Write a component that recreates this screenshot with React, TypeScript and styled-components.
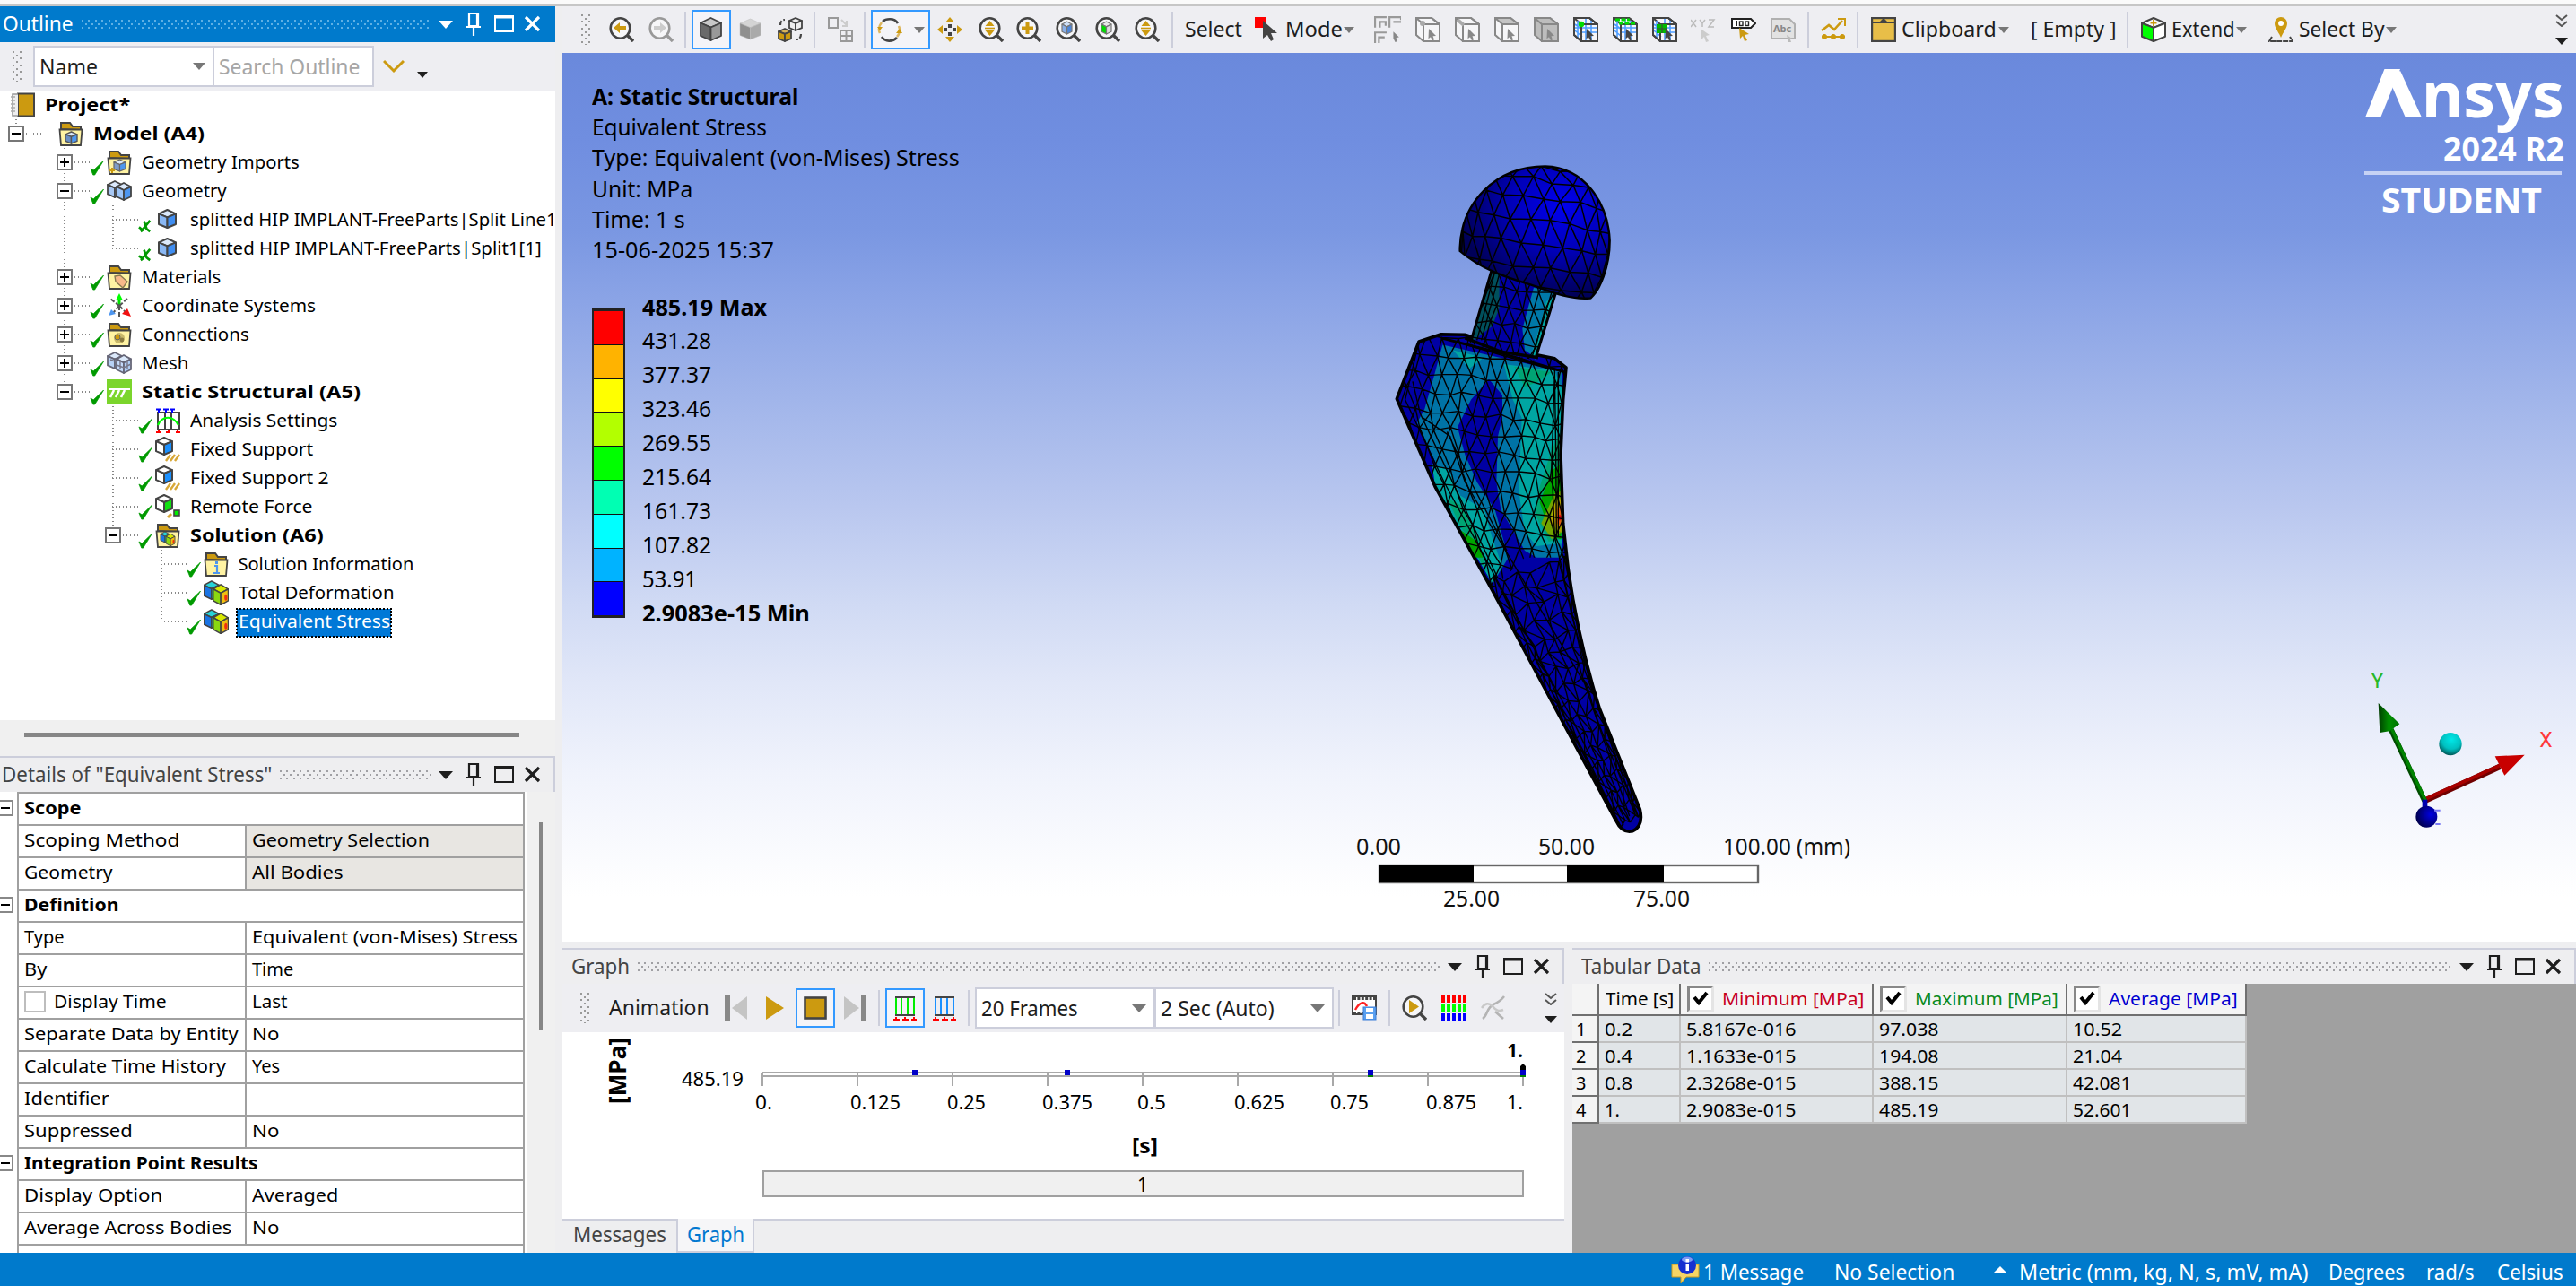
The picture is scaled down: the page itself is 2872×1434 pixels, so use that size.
import React, { useLayoutEffect, useRef } from "react";
import styled, { createGlobalStyle, css } from "styled-components";

const FONT = '"Noto Sans", "Open Sans", sans-serif';
const BLUE = "#007acc";
const GOLD = "#cc9a10";
const INK = "#444444";

const Global = createGlobalStyle`
  html, body { margin: 0; padding: 0; }
  body { font-family: ${FONT}; font-size: 20px; color: #000; background: #eeeef0; overflow: hidden; }
  svg { display: block; flex: none; }
`;

/* ---------- text fitted to a fixed run width ---------- */

const FitBox = styled.span<{ $w: number }>`
  display: inline-block;
  flex: none;
  width: ${(p) => p.$w}px;
  white-space: nowrap;
`;
const FitInner = styled.span`
  display: inline-block;
  white-space: nowrap;
  transform-origin: 0 50%;
`;

function Fit({ w, children }: { w: number; children: string }) {
  const ref = useRef<HTMLSpanElement>(null);
  useLayoutEffect(() => {
    const el = ref.current;
    if (el && el.offsetWidth) el.style.transform = `scaleX(${w / el.offsetWidth})`;
  }, [w, children]);
  return (
    <FitBox $w={w}>
      <FitInner ref={ref}>{children}</FitInner>
    </FitBox>
  );
}

/* ---------- icons ---------- */

type CubeProps = { x: number; y: number; w: number; h: number; top: string; left: string; right: string; stroke?: string; sw?: number };
function Cube({ x, y, w, h, top, left, right, stroke = INK, sw = 1.8 }: CubeProps) {
  const p = (a: number, b: number) => `${x + a * w},${y + b * h}`;
  return (
    <g stroke={stroke} strokeWidth={sw} strokeLinejoin="round">
      <polygon points={`${p(0.5, 0)} ${p(1, 0.22)} ${p(0.5, 0.42)} ${p(0, 0.22)}`} fill={top} />
      <polygon points={`${p(0, 0.22)} ${p(0.5, 0.42)} ${p(0.5, 1)} ${p(0, 0.8)}`} fill={left} />
      <polygon points={`${p(1, 0.22)} ${p(0.5, 0.42)} ${p(0.5, 1)} ${p(1, 0.8)}`} fill={right} />
    </g>
  );
}

function Lens({ c = INK, children }: { c?: string; children?: React.ReactNode }) {
  return (
    <g>
      <path d="M20 20l7 7" stroke={c} strokeWidth="3.4" />
      <ellipse cx="12.5" cy="12.5" rx="10.8" ry="11.2" fill="#f6f6f8" stroke={c} strokeWidth="2.6" />
      {children}
    </g>
  );
}

type SelProps = { fill?: string; face?: string; top?: string; c?: string; grid?: boolean; children?: React.ReactNode };
function SelBox({ fill = "none", face = "none", top = "none", c = "#888", grid, children }: SelProps) {
  return (
    <g>
      <polygon points="1,1 18,1 27,8 27,27 9,27 1,20" fill={fill} stroke={c} strokeWidth="2" />
      <polygon points="1,1 18,1 27,8 9,8" fill={top} stroke={c} strokeWidth="2" />
      <polygon points="9,8 27,8 27,27 9,27" fill={face} stroke={c} strokeWidth="2" />
      {grid && <path d="M5 4v20M14 2v24M20 4v22M2 12h24M9 17h17M2 8l8 6M2 15l8 7" stroke="#4d9dff" strokeWidth="1.6" fill="none" />}
      {grid && <path d="M1 1h17l9 7v19H9L1 20zM9 8h18M9 8v19" stroke={c} strokeWidth="2" fill="none" />}
      {children}
      <path d="M15 13l8 8-3.500 .3 1.500 4-2 1-2-4-2.500 2z" fill={c} />
    </g>
  );
}

const Folder = ({ children }: { children?: React.ReactNode }) => (
  <g>
    <path d="M3 9V2h10l3 4h9v4z" fill={GOLD} stroke={INK} strokeWidth="2" />
    <path d="M1.5 9.5h25L25 27H3z" fill="#fff3a3" stroke={INK} strokeWidth="1.8" />
    {children}
  </g>
);

const Film = ({ c }: { c: string }) => (
  <g>
    <path d="M4 2v20M10 2v20M17 2v20M24 2v20" stroke={c} strokeWidth="2" />
    <path d="M3 2h22M3 22h22" stroke={INK} strokeWidth="2" />
    <path d="M1 27h7M11 27h7M21 27h6M4 24v3M14 24v3M24 24v3" stroke="#f00" strokeWidth="2" />
  </g>
);

const contourCube = (x: number, y: number, s: number) => (
  <g>
    <Cube x={x} y={y} w={s * 0.62} h={s * 0.75} top="#27d3d8" left="#1a74e4" right="#20c890" sw={s / 18} />
    <Cube x={x + s * 0.38} y={y + s * 0.14} w={s * 0.62} h={s * 0.84} top="#d8e800" left="#8ad810" right="#f0c010" sw={s / 18} />
    <ellipse cx={x + s * 0.9} cy={y + s * 0.68} rx={s * 0.06} ry={s * 0.13} fill="#f03010" />
  </g>
);

const ICONS: Record<string, React.ReactNode> = {
  project: (<g><rect x="9" y="1.5" width="18" height="25" fill={GOLD} stroke={INK} strokeWidth="2" /><path d="M9 2H3v24h6" fill="#eee" stroke="#999" strokeWidth="1.6" /><path d="M1 5h5M1 9h5M1 13h5M1 17h5M1 21h5" stroke="#aaa" strokeWidth="1.4" /></g>),
  model: <Folder><Cube x={8} y={12} w={13} h={13} top="#dbe9fb" left="#6a8ec4" right="#4d96f0" stroke="#555" sw={1.4} /></Folder>,
  gimports: <Folder><Cube x={8} y={11} w={13} h={13} top="#dbe9fb" left="#7f9cc9" right="#4d96f0" stroke="#666" sw={1.2} /><path d="M6 20v6M3 23h6" stroke={GOLD} strokeWidth="2" /></Folder>,
  geometry: (<g><Cube x={1} y={3} w={16} h={18} top="#dbe9fb" left="#a8c8f4" right="#8ab8f4" /><Cube x={11} y={5} w={16} h={19} top="#dbe9fb" left="#9cc4f8" right="#4d96f0" /></g>),
  body: <Cube x={4} y={3} w={19} h={20} top="#dbe9fb" left="#8ab8f4" right="#3f8df0" sw={2} />,
  materials: <Folder><polygon points="9,13 15,12 23,19 18,26 10,19" fill="#f8b98a" stroke="#8a7a50" strokeWidth="1.4" /></Folder>,
  coords: (<g><path d="M14 14V5" stroke="#0d0" strokeWidth="3" /><polygon points="14,0 10,8 18,8" fill="#0f0" /><path d="M14 14l-7 8M14 14l7 7M14 14v12M14 14L4 6M14 14l9-8" stroke="#555" strokeWidth="2" strokeDasharray="5 2" /><polygon points="2,25 5,18 10,23" fill="#4d96f0" /><polygon points="27,26 17,23 23,17" fill="#f01010" /></g>),
  connections: <Folder><circle cx="14" cy="18" r="6" fill="#c9b96a" /><circle cx="12" cy="17" r="3" fill={GOLD} stroke="#666" /><circle cx="17" cy="20" r="2.4" fill="#8a7a40" /></Folder>,
  mesh: (<g><Cube x={1} y={2} w={16} h={18} top="#dbe9fb" left="#b8d2f6" right="#a6c8f6" stroke="#667" /><Cube x={11} y={5} w={16} h={20} top="#dbe9fb" left="#c4dafa" right="#b0cdf4" stroke="#667" /><path d="M15 12v9M23 12v9M11 16l8 3 8-4M4 10l8 3" stroke="#778" strokeWidth="1.4" fill="none" /></g>),
  structural: (<g><rect width="28" height="28" fill="#7bd52c" /><path d="M2 11h24" stroke="#fff" strokeWidth="2" /><path d="M8 12l-4 8M14 12l-4 8M20 12l-4 8" stroke="#fff" strokeWidth="2.6" /></g>),
  analysis: (<g><path d="M3 5h24v19H3zM11 5v19M18 5v19" stroke={INK} strokeWidth="2" fill="none" /><path d="M3 19C8 8 20 8 26 19" stroke="#0f0" strokeWidth="2.2" fill="none" /><path d="M1 1.5h6M9 1.5h6M17 1.5h5M4 1v4M12 1v4M19 1v4" stroke="#00f" strokeWidth="2" /><path d="M1 27h5M12 27h5M23 27h5M4 24v3M15 24v3M25 24v3" stroke="#f00" strokeWidth="2" /></g>),
  fixed: (<g><Cube x={1} y={1} w={18} h={19} top="#fff" left="#fff" right="#1a90ff" sw={2} /><path d="M12 27l5-7M17 27l5-7M22 27l5-7" stroke="#d8a838" strokeWidth="2.4" /></g>),
  remote: (<g><Cube x={1} y={1} w={18} h={19} top="#fff" left="#fff" right="#10e010" sw={2} /><rect x="21" y="18" width="6" height="6" fill="#0e0" stroke={INK} strokeWidth="1.6" /><path d="M14 26l4-4" stroke="#d8a838" strokeWidth="3" /></g>),
  solution: <Folder>{contourCube(6, 10, 16)}</Folder>,
  info: <Folder><path d="M12 16h3v8M11 24h7" stroke="#4d96f0" strokeWidth="2.2" fill="none" /><rect x="13" y="11" width="3" height="3" fill="#4d96f0" /></Folder>,
  result: contourCube(0.5, 1, 27),
  magPrev: <Lens><path d="M5 12l7-6v4h7v4h-7v4z" fill={GOLD} /></Lens>,
  magNext: <Lens c="#999"><path d="M20 12l-7-6v4H6v4h7v4z" fill="#ccc" /></Lens>,
  shaded: <Cube x={2} y={1} w={23} h={25} top="#c8c8c8" left="#6a6a6a" right="#999" />,
  shadedPlain: <Cube x={2} y={2} w={23} h={23} top="#d4d4d4" left="#8f8f8f" right="#aaa" stroke="#bbb" sw={0.5} />,
  toggle: (<g><Cube x={13} y={1} w={14} h={14} top="#eee" left="#eee" right="#eee" /><Cube x={1} y={13} w={14} h={14} top="#d9b45a" left={GOLD} right={GOLD} /><path d="M3 9c0-4 2-6 5-6M26 19c0 4-2 6-5 6" stroke={INK} strokeWidth="2.2" fill="none" strokeDasharray="5 2" /></g>),
  explode: (<g stroke="#999" strokeWidth="2" fill="none"><rect x="1" y="1" width="10" height="11" /><path d="M15 3l6 6M21 4v6h-5" stroke="#ccc" /><rect x="14" y="15" width="13" height="12" /><path d="M20.5 15v12M14 21h13" /></g>),
  rotate: (<g fill="none" strokeWidth="2.6"><path d="M6 5C9 2 19 0 23 7M22 23C17 28 9 28 5 22" stroke={INK} /><path d="M5 6C1 11 1 14 3 18M24 10c2 4 1 9-2 12" stroke="#ddb760" /><path d="M0 11h6l-3 4zM21 18h7l-3-5z" fill={GOLD} stroke="none" /></g>),
  pan: (<g fill={GOLD}><polygon points="14,0 19,6 9,6" /><polygon points="14,28 19,22 9,22" /><polygon points="0,14 6,9 6,19" /><polygon points="28,14 22,9 22,19" /><g fill={INK}><rect x="12" y="8" width="4" height="4" /><rect x="12" y="17" width="4" height="4" /><rect x="7" y="12" width="4" height="4" /><rect x="17" y="12" width="4" height="4" /></g></g>),
  zoomUD: <Lens><path d="M12.5 4l5 6h-10zM12.5 21l5-6h-10z" fill={GOLD} /><path d="M7 12.500h11" stroke={GOLD} strokeWidth="1.6" /></Lens>,
  zoomPlus: <Lens><path d="M12.5 6v13M6 12.500h13" stroke={GOLD} strokeWidth="4" /></Lens>,
  zoomFit: <Lens><Cube x={7} y={5} w={11} h={14} top="#cfe0f8" left="#8ab0e8" right="#4d86d8" stroke="#777" sw={1.2} /></Lens>,
  zoomSel: <Lens><Cube x={7} y={5} w={11} h={14} top="#e8e8e8" left="#0d0" right="#ddd" stroke="#777" sw={1.2} /></Lens>,
  mode: (<g><rect x="0" y="0" width="13" height="12" fill="#f00" /><path d="M9 4v20l5-4 4 7 3-2-3-7h7z" fill={INK} /></g>),
  selFilter: (<g stroke="#999" strokeWidth="2" fill="none"><path d="M1 12V1h12M6 12V6h6v4M16 12V1h12v3M20 6h8M1 28V17h12M5 28v-6h6" /><path d="M20 16l6 6-3 .3 1 4-2 .7-2-4z" fill="#888" stroke="none" /></g>),
  selVertex: <SelBox fill="#f6f6f8"><circle cx="8" cy="7" r="3" fill="#aaa" /></SelBox>,
  selEdge: <SelBox fill="#f6f6f8"><path d="M3 3l7 6" stroke="#aaa" strokeWidth="4" /></SelBox>,
  selFace: <SelBox fill="#f6f6f8" top="#c4c4c4" />,
  selBody: <SelBox fill="#bdbdbd" face="#bdbdbd" top="#bdbdbd" />,
  selNode: <SelBox fill="#f6f6f8" c={INK} grid><circle cx="9" cy="8" r="3.2" fill="#0d0" /></SelBox>,
  selElemFace: <SelBox fill="#f6f6f8" c={INK} grid><path d="M3 3h16M7 7h18" stroke="#0d0" strokeWidth="3" strokeDasharray="5 1.5" /></SelBox>,
  selElem: <SelBox fill="#f6f6f8" c={INK} grid><rect x="5" y="8" width="12" height="10" fill="#0b0" /><path d="M5 13h12M11 8v10" stroke={INK} /></SelBox>,
  xyz: (<g><path d="M0 3l6 8M6 3l-6 8M10 3l3 4 3-4M13 7v4M20 3h6l-6 8h6" stroke="#bbb" strokeWidth="1.5" fill="none" /><path d="M11 13l10 7-4 1 3 6-3 1-2-6-3 3z" fill="#ccc" /></g>),
  label100: (<g><path d="M1 2h21l5 5-5 5H1z" fill="#fff" stroke="#222" strokeWidth="2" /><path d="M6 4v6" stroke="#222" strokeWidth="2" /><rect x="9.5" y="5" width="3.5" height="4.5" fill="none" stroke="#222" strokeWidth="1.4" /><rect x="16" y="5" width="3.5" height="4.5" fill="none" stroke="#222" strokeWidth="1.4" /><path d="M9 12l11 7-5 1 3 6-3 1-2-6-3 3z" fill={GOLD} /></g>),
  abc: (<g><path d="M1 2h20l6 6v16H1z" fill="#e2e2e2" stroke="#b0b0b0" strokeWidth="2" /><path d="M18 20l6 4-2 1 1 3h-3z" fill="#bbb" /><text x="3" y="17" fontSize="11" fontFamily={FONT} fontWeight="700" fill="#888">Abc</text></g>),
  chart: (<g stroke={GOLD} fill={GOLD}><path d="M1 15l8-6 6 5L24 4" strokeWidth="2.6" fill="none" /><path d="M19 2h8v8" strokeWidth="2" fill="none" /><path d="M1 22h26" strokeWidth="2" /><circle cx="4" cy="22" r="2.6" /><circle cx="14" cy="22" r="2.6" /><circle cx="24" cy="22" r="2.6" /></g>),
  clipboard: (<g><rect x="1" y="1" width="26" height="26" fill="#e8be48" stroke={INK} strokeWidth="2.4" /><path d="M2 6h24" stroke={INK} strokeWidth="2" /><polygon points="14,1 19,6 9,6" fill={INK} /></g>),
  extend: (<g><Cube x={1} y={1} w={26} h={26} top="#f6f6f8" left="#0f0" right="#fff" sw={2} /><path d="M14 3v7M10.5 6.500h7" stroke={GOLD} strokeWidth="2" /></g>),
  pin: (<g><path d="M14 23C11 16 7 12 7 7a7 7 0 0 1 14 0c0 5-4 9-7 16z" fill={GOLD} /><circle cx="14" cy="7" r="3" fill="#fff" /><path d="M4 22l-3 5h26l-3-5" fill="none" stroke={INK} strokeWidth="2" strokeDasharray="6 1" /></g>),
  first: (<g><rect x="0" y="0" width="6" height="28" fill="#888" /><polygon points="25,1 25,27 8,14" fill="#c4c4c4" /></g>),
  play: <polygon points="2,1 2,27 22,14" fill={GOLD} />,
  stop: <rect x="2.5" y="2.5" width="23" height="23" fill={GOLD} stroke={INK} strokeWidth="2.6" />,
  last: (<g><rect x="21" y="0" width="6" height="28" fill="#888" /><polygon points="2,1 2,27 19,14" fill="#c4c4c4" /></g>),
  filmGreen: <Film c="#0e0" />,
  filmBlue: <Film c="#1a90ff" />,
  exportVideo: (<g><rect x="1" y="1" width="26" height="20" fill="#fff" stroke={INK} strokeWidth="2" /><path d="M2 3h25M2 20h12" stroke={INK} strokeWidth="4" strokeDasharray="3 1.4" /><path d="M4 16c5-9 10-10 13-4" stroke="#f22" strokeWidth="2.4" fill="none" /><rect x="13" y="13" width="14" height="14" fill="#5aa0f0" stroke="#3c7fd8" /><rect x="16" y="14" width="8" height="4" fill="#fff" /><rect x="16" y="21" width="8" height="5" fill="#fff" /></g>),
  magPlay: <Lens><polygon points="8,5 8,20 19,12.5" fill={GOLD} /></Lens>,
  rgb: (<g strokeWidth="8"><path d="M0 4h28" stroke="#f00" strokeDasharray="4 2" /><path d="M0 14h28" stroke="#0f0" strokeDasharray="4 2" /><path d="M0 24h28" stroke="#00f" strokeDasharray="4 2" /></g>),
  curve: (<g stroke="#b4b4b4" strokeWidth="2.6" fill="none"><path d="M2 26c6-4 4-12 12-16 5-2 8-4 12-9" /><path d="M1 14c4-6 8-6 12-2 4 5 7 6 12 4" stroke="#c8c8c8" /><path d="M16 18l9 8" /></g>),
  message: (<g><path d="M1 10h30v14H17l-6 7v-7H1z" fill="#f5d565" stroke="#c89a20" /><circle cx="18" cy="11" r="10" fill="#1530d0" /><ellipse cx="18" cy="4.500" rx="6" ry="3" fill="#7c9cf4" /><rect x="16.5" y="9" width="3.5" height="8" fill="#fff" /><rect x="16.5" y="4" width="3.5" height="3.5" fill="#fff" /></g>),
};

const Glyph = ({ name, size = 28 }: { name: string; size?: number }) => (
  <svg width={size} height={size} viewBox={name === "message" ? "0 0 32 32" : "0 0 28 28"}>{ICONS[name]}</svg>
);

/* ---------- shared bars ---------- */

const DotFill = styled.div<{ $c: string }>`
  flex: 1;
  height: 10px;
  background:
    repeating-linear-gradient(90deg, ${(p) => p.$c} 0 2px, transparent 2px 7.4px) 0 0 / 100% 2px no-repeat,
    repeating-linear-gradient(90deg, transparent 0 3.7px, ${(p) => p.$c} 3.7px 5.7px, transparent 5.7px 7.4px) 0 4px / 100% 2px no-repeat,
    repeating-linear-gradient(90deg, ${(p) => p.$c} 0 2px, transparent 2px 7.4px) 0 8px / 100% 2px no-repeat;
`;

const Gripper = styled.div<{ $l: number }>`
  flex: none;
  width: 11px;
  height: 34px;
  margin-left: ${(p) => p.$l}px;
  background:
    repeating-linear-gradient(#999 0 2px, transparent 2px 7.4px) 1px 0 / 2px 100% no-repeat,
    repeating-linear-gradient(transparent 0 3.7px, #999 3.7px 5.7px, transparent 5.7px 7.4px) 5px 0 / 2px 100% no-repeat,
    repeating-linear-gradient(#999 0 2px, transparent 2px 7.4px) 9px 0 / 2px 100% no-repeat;
`;

const HeaderBar = styled.div<{ $active?: boolean }>`
  display: flex;
  flex: none;
  align-items: center;
  box-sizing: border-box;
  height: 40px;
  padding-right: 15px;
  font-size: 23px;
  line-height: 36px;
  color: ${(p) => (p.$active ? "#fff" : "#444")};
  background: ${(p) => (p.$active ? BLUE : "#eeeef0")};
  ${(p) =>
    p.$active
      ? css`padding-right: 17px;`
      : css`
          border-top: 2px solid #cccedb;
          border-right: 2px solid #cccedb;
        `}
`;
const HeaderText = styled.div<{ $l: number }>`
  margin: 0 9px 0 ${(p) => p.$l}px;
  padding-bottom: 2px;
`;
const WindowButtons = styled.div`
  display: flex;
  align-items: center;
  margin-left: 8px;
  padding-bottom: 1px;
`;

function Header({ title, w, l, active }: { title: string; w: number; l: number; active?: boolean }) {
  const c = active ? "#fff" : "#1e1e1e";
  return (
    <HeaderBar $active={active}>
      <HeaderText $l={l}><Fit w={w}>{title}</Fit></HeaderText>
      <DotFill $c={active ? "#5fb0e4" : "#a0a0a4"} />
      <WindowButtons>
        <svg width="114" height="28" viewBox="0 0 114 28">
          <polygon points="1,10 17,10 9,19" fill={c} />
          <path d="M35 2h10v14H35zM32 17h16M40 17v10M44 2v14" stroke={c} strokeWidth="2.2" fill="none" />
          <path d="M64 5h20v17H64z" stroke={c} strokeWidth="2" fill="none" />
          <path d="M63 6h22" stroke={c} strokeWidth="3" />
          <path d="M98 6l15 15M113 6L98 21" stroke={c} strokeWidth="3.2" />
        </svg>
      </WindowButtons>
    </HeaderBar>
  );
}

const Tri = styled.i<{ $l?: number; $c?: string; $up?: boolean; $s?: number }>`
  flex: none;
  width: 0;
  height: 0;
  margin-left: ${(p) => p.$l ?? 0}px;
  border: ${(p) => p.$s ?? 6}px solid transparent;
  ${(p) =>
    p.$up
      ? css`border-top: 0; border-bottom: 8px solid ${p.$c ?? "#777"};`
      : css`border-bottom: 0; border-top: ${(p.$s ?? 6) + 1}px solid ${p.$c ?? "#777"};`}
`;
const Sep = styled.i<{ $l: number }>`
  flex: none;
  width: 2px;
  height: 40px;
  margin-left: ${(p) => p.$l}px;
  background: #cccedb;
`;
const Slot = styled.div<{ $l: number; $w?: number; $on?: boolean }>`
  display: flex;
  flex: none;
  align-items: center;
  justify-content: center;
  gap: 13px;
  box-sizing: border-box;
  width: ${(p) => p.$w ?? 28}px;
  height: 44px;
  margin-left: ${(p) => p.$l}px;
  ${(p) => p.$on && css`border: 2px solid #3399ff; background: #f4f4f8;`}
`;
const BarText = styled.div<{ $l: number }>`
  flex: none;
  margin-left: ${(p) => p.$l}px;
  padding-bottom: 2px;
  font-size: 23px;
  line-height: 32px;
  color: #1e1e1e;
`;
const OverflowMark = styled.div<{ $l: number }>`
  display: flex;
  flex: none;
  flex-direction: column;
  align-items: center;
  gap: 12px;
  margin-left: ${(p) => p.$l}px;
`;
const Overflow = ({ l }: { l: number }) => (
  <OverflowMark $l={l}>
    <svg width="14" height="14" viewBox="0 0 14 14"><path d="M1 1l6 5 6-5M1 8l6 5 6-5" stroke="#555" strokeWidth="2" fill="none" /></svg>
    <Tri $c="#1e1e1e" $s={7} />
  </OverflowMark>
);
const MoreMark = styled.div`
  margin: 18px 0 0 14px;
`;
const Combo = styled.div<{ $w: number; $l: number; $muted?: boolean }>`
  display: flex;
  flex: none;
  align-items: center;
  justify-content: space-between;
  box-sizing: border-box;
  width: ${(p) => p.$w}px;
  height: 46px;
  margin-left: ${(p) => p.$l}px;
  padding: 0 8px 0 5px;
  border: 2px solid #cccedb;
  background: #fff;
  font-size: 23px;
  line-height: 32px;
  color: ${(p) => (p.$muted ? "#a6a6a6" : "#1e1e1e")};
`;

/* ---------- page frame ---------- */

const Window = styled.div`
  display: flex;
  flex-direction: column;
  width: 2872px;
  height: 1434px;
  overflow: hidden;
  background: #eeeef0;
`;
const TopEdge = styled.div`
  flex: none;
  height: 7px;
  box-sizing: border-box;
  background: #fafafa;
  border-bottom: 2px solid #c6c6c6;
`;
const Body = styled.div`
  display: flex;
  height: 1390px;
`;
const LeftColumn = styled.div`
  display: flex;
  flex: none;
  flex-direction: column;
  width: 619px;
  margin-right: 8px;
`;
const RightColumn = styled.div`
  display: flex;
  flex: 1;
  flex-direction: column;
  min-width: 0;
`;

/* ---------- outline ---------- */

const OutlineBar = styled.div`
  display: flex;
  flex: none;
  align-items: center;
  height: 54px;
  background: #eeeef2;
`;
const TreeArea = styled.div`
  flex: none;
  height: 702px;
  overflow: hidden;
  background: #fff;
`;
const TreeRow = styled.div`
  display: flex;
  align-items: center;
  height: 32px;
  padding-left: 9px;
  line-height: 30px;
  white-space: nowrap;
`;
type Line = "full" | "top" | "bottom" | "none";
const lineHeight: Record<Line, string> = { full: "32px", top: "16px", bottom: "16px", none: "0" };
const Guide = styled.div<{ $v: Line; $h?: number; $own?: boolean }>`
  display: flex;
  flex: none;
  align-items: center;
  width: ${(p) => (p.$own ? 55.5 : 54)}px;
  height: 32px;
  background:
    repeating-linear-gradient(#888 0 1.5px, transparent 1.5px 4px) 8px 0 / 2px ${(p) => lineHeight[p.$v]} no-repeat,
    repeating-linear-gradient(90deg, #888 0 1.5px, transparent 1.5px 4px) 8px 15px / ${(p) => p.$h ?? 0}px 2px no-repeat;
`;
const Expander = styled.i<{ $plus?: boolean }>`
  flex: none;
  box-sizing: border-box;
  width: 18px;
  height: 18px;
  border: 2px solid #777;
  background:
    linear-gradient(#000 0 0) center / 10px 2px no-repeat,
    linear-gradient(#000 0 0) center / ${(p) => (p.$plus ? "2px 10px" : "0 0")} no-repeat,
    #fff;
`;
const StateMark = styled.div`
  width: 17px;
  height: 17px;
  margin: 13px 2px 0 auto;
`;
const TreeIcon = styled.div`
  flex: none;
  width: 28px;
  height: 28px;
  margin-right: 11px;
`;
const TreeText = styled.div<{ $bold?: boolean; $sel?: boolean }>`
  font-weight: ${(p) => (p.$bold ? 700 : 400)};
  ${(p) =>
    p.$sel &&
    css`
      height: 31px;
      line-height: 27px;
      margin: 2px 0 0 -2px;
      padding: 0 1px 0 2px;
      box-sizing: border-box;
      color: #fff;
      background: #0078d7;
      outline: 2px dotted #000;
      outline-offset: -1px;
      text-decoration: underline;
      text-underline-offset: 4px;
    `}
`;

type Node = { t: string; w: number; icon: string; lv: number; exp?: "+" | "-"; state?: "ok" | "x"; own: Line; guides?: Line[]; bold?: boolean; sel?: boolean };
const NODES: Node[] = [
  { t: "Model (A4)", w: 124, icon: "model", lv: 0, exp: "-", own: "top", bold: true },
  { t: "Geometry Imports", w: 176, icon: "gimports", lv: 1, exp: "+", state: "ok", own: "full" },
  { t: "Geometry", w: 95, icon: "geometry", lv: 1, exp: "-", state: "ok", own: "full" },
  { t: "splitted HIP IMPLANT-FreeParts|Split Line1", w: 409, icon: "body", lv: 2, state: "x", own: "full", guides: ["none", "full"] },
  { t: "splitted HIP IMPLANT-FreeParts|Split1[1]", w: 392, icon: "body", lv: 2, state: "x", own: "top", guides: ["none", "full"] },
  { t: "Materials", w: 88, icon: "materials", lv: 1, exp: "+", state: "ok", own: "full" },
  { t: "Coordinate Systems", w: 194, icon: "coords", lv: 1, exp: "+", state: "ok", own: "full" },
  { t: "Connections", w: 120, icon: "connections", lv: 1, exp: "+", state: "ok", own: "full" },
  { t: "Mesh", w: 52, icon: "mesh", lv: 1, exp: "+", state: "ok", own: "full" },
  { t: "Static Structural (A5)", w: 244, icon: "structural", lv: 1, exp: "-", state: "ok", own: "top", bold: true },
  { t: "Analysis Settings", w: 164, icon: "analysis", lv: 2, state: "ok", own: "full" },
  { t: "Fixed Support", w: 137, icon: "fixed", lv: 2, state: "ok", own: "full" },
  { t: "Fixed Support 2", w: 155, icon: "fixed", lv: 2, state: "ok", own: "full" },
  { t: "Remote Force", w: 136, icon: "remote", lv: 2, state: "ok", own: "full" },
  { t: "Solution (A6)", w: 149, icon: "solution", lv: 2, exp: "-", state: "ok", own: "top", bold: true },
  { t: "Solution Information", w: 196, icon: "info", lv: 3, state: "ok", own: "full" },
  { t: "Total Deformation", w: 174, icon: "result", lv: 3, state: "ok", own: "full" },
  { t: "Equivalent Stress", w: 169, icon: "result", lv: 3, state: "ok", own: "top", sel: true },
];

function TreeNode({ n }: { n: Node }) {
  return (
    <TreeRow>
      {Array.from({ length: n.lv }, (_, i) => <Guide key={i} $v={n.guides?.[i] ?? "none"} />)}
      <Guide $own $v={n.own} $h={30}>
        {n.exp && <Expander $plus={n.exp === "+"} />}
        {n.state && (
          <StateMark>
            <svg width="17" height="17" viewBox="0 0 18 18">
              {n.state === "ok"
                ? <path d="M1 9.500l3.500 2L16.500 0 6 17H4z" fill="#009a00" stroke="#009a00" strokeWidth="0.8" />
                : <path d="M1 11l4 3L14 3M7 4l3 9 4 3M3 16l3-2" stroke="#009a00" strokeWidth="2.8" fill="none" />}
            </svg>
          </StateMark>
        )}
      </Guide>
      <TreeIcon><Glyph name={n.icon} /></TreeIcon>
      <TreeText $bold={n.bold} $sel={n.sel}><Fit w={n.w}>{n.t}</Fit></TreeText>
    </TreeRow>
  );
}

const ProjectRow = styled(TreeRow)`
  padding-left: 11px;
  font-weight: 700;
`;
const HScroll = styled.div`
  flex: none;
  box-sizing: border-box;
  height: 40px;
  padding: 14px 40px 0 27px;
  background: #f0f0f0;
`;
const HThumb = styled.div`
  height: 5px;
  background: #868686;
`;

/* ---------- details ---------- */

const DetailsBody = styled.div`
  display: flex;
  height: 514px;
  overflow: hidden;
  background: #f0f0f0;
`;
const DetailGrid = styled.div`
  width: 585px;
  padding-right: 3px;
  background: #fff;
`;
const DetailRow = styled.div`
  display: flex;
  height: 36px;
`;
const DetailGutter = styled.div`
  display: flex;
  flex: none;
  align-items: center;
  width: 19px;
`;
const SectionBox = styled.i`
  box-sizing: border-box;
  width: 15px;
  height: 18px;
  border: 2px solid #888;
  border-left: 0;
  background: linear-gradient(#000 0 0) 1px center / 10px 2px no-repeat;
`;
const Cell = styled.div<{ $w?: number; $ro?: boolean; $last?: boolean; $bold?: boolean }>`
  display: flex;
  align-items: center;
  box-sizing: border-box;
  width: ${(p) => p.$w ?? 566}px;
  height: 36px;
  padding: 0 0 2px 6px;
  border-top: 2px solid #a0a0a0;
  border-left: 2px solid #a0a0a0;
  ${(p) => p.$last && css`border-right: 2px solid #a0a0a0;`}
  background: ${(p) => (p.$ro ? "#e8e6e2" : "#fff")};
  font-weight: ${(p) => (p.$bold ? 700 : 400)};
  line-height: 28px;
`;
const TickBox = styled.i`
  box-sizing: border-box;
  width: 24px;
  height: 24px;
  margin-right: 9px;
  border: 2px solid #bdbdbd;
`;
const VScroll = styled.div`
  flex: 1;
  padding: 34px 0 0 13px;
`;
const VThumb = styled.div`
  width: 4px;
  height: 232px;
  background: #868686;
`;

type Detail = { k: string; kw: number; v?: string; vw?: number; ro?: boolean; tick?: boolean; section?: boolean };
const DETAILS: Detail[] = [
  { k: "Scope", kw: 63, section: true },
  { k: "Scoping Method", kw: 173, v: "Geometry Selection", vw: 198, ro: true },
  { k: "Geometry", kw: 99, v: "All Bodies", vw: 102, ro: true },
  { k: "Definition", kw: 105, section: true },
  { k: "Type", kw: 45, v: "Equivalent (von-Mises) Stress", vw: 296 },
  { k: "By", kw: 25, v: "Time", vw: 46 },
  { k: "Display Time", kw: 126, v: "Last", vw: 40, tick: true },
  { k: "Separate Data by Entity", kw: 239, v: "No", vw: 30 },
  { k: "Calculate Time History", kw: 225, v: "Yes", vw: 31 },
  { k: "Identifier", kw: 95 },
  { k: "Suppressed", kw: 121, v: "No", vw: 30 },
  { k: "Integration Point Results", kw: 260, section: true },
  { k: "Display Option", kw: 154, v: "Averaged", vw: 96 },
  { k: "Average Across Bodies", kw: 231, v: "No", vw: 30 },
];

/* ---------- viewport ---------- */

const TopToolbar = styled.div`
  display: flex;
  flex: none;
  align-items: center;
  box-sizing: border-box;
  height: 52px;
  background: #eeeef2;
`;
const Viewport = styled.div`
  position: relative;
  flex: none;
  box-sizing: border-box;
  height: 991px;
  padding: 31px 0 0 33px;
  background: linear-gradient(#6a89dc 0%, #708ee0 10%, #7a97e2 20%, #8ba4e6 28%, #a1b5ea 39%, #b9c7ef 51%, #d0daf4 62%, #e1e7f8 71%, #f0f3fc 81%, #ffffff 95%);
`;
const Caption = styled.div<{ $bold?: boolean }>`
  height: 34.2px;
  font-size: 25px;
  line-height: 34px;
  font-weight: ${(p) => (p.$bold ? 700 : 400)};
`;
const Legend = styled.div`
  display: flex;
  margin-top: 48px;
`;
const LegendBar = styled.div`
  display: flex;
  flex-direction: column;
  box-sizing: border-box;
  width: 37px;
  height: 346px;
  border: 2px solid #222;
  border-top-width: 4px;
  border-bottom-width: 3px;
`;
const Band = styled.div<{ $c: string }>`
  flex: 1;
  background: ${(p) => p.$c};
  & + & { border-top: 1.5px solid #111; }
`;
const LegendLabels = styled.div`
  margin: -20px 0 0 19px;
`;
const LegendLabel = styled.div<{ $edge?: boolean; $gap?: number }>`
  height: 38px;
  margin-bottom: ${(p) => p.$gap ?? 0}px;
  line-height: 38px;
  font-size: 25px;
  font-weight: ${(p) => (p.$edge ? 700 : 400)};
`;
const Brand = styled.div`
  position: absolute;
  top: 10px;
  right: 13px;
  display: flex;
  flex-direction: column;
  align-items: flex-end;
  width: 225px;
  color: #fff;
  font-weight: 700;
`;
const Wordmark = styled.div`
  display: flex;
  align-items: flex-start;
  height: 76px;
  font-size: 70px;
  line-height: 70px;
`;
const Slab = styled.i<{ $w: number; $clip: string; $ml: number }>`
  width: ${(p) => p.$w}px;
  height: 54px;
  margin: 8px 0 0 ${(p) => p.$ml}px;
  background: #fff;
  clip-path: polygon(${(p) => p.$clip});
`;
const Release = styled.div`
  height: 46px;
  font-size: 36px;
  line-height: 42px;
`;
const Rule = styled.div`
  width: 220px;
  height: 4px;
  margin-right: 3px;
  background: #c6d2f4;
`;
const Edition = styled.div`
  margin: 6px 25px 0 0;
  font-size: 37px;
  line-height: 44px;
`;
const Scene = styled.svg<{ $x: number; $y: number }>`
  position: absolute;
  left: ${(p) => p.$x - 627}px;
  top: ${(p) => p.$y - 59}px;
`;

/* ---------- finite element mesh ---------- */

function rng(seed: number) {
  let s = seed;
  return () => {
    s = (s * 16807) % 2147483647;
    return s / 2147483647 - 0.5;
  };
}

function triMesh(rows: number, cols: number, at: (r: number, c: number) => [number, number]) {
  const P = Array.from({ length: rows }, (_, r) => Array.from({ length: cols }, (_, c) => at(r, c)));
  let d = "";
  const seg = (a: [number, number], b: [number, number]) => {
    d += `M${a[0].toFixed(1)} ${a[1].toFixed(1)}L${b[0].toFixed(1)} ${b[1].toFixed(1)}`;
  };
  for (let r = 0; r < rows; r++)
    for (let c = 0; c < cols; c++) {
      if (c + 1 < cols) seg(P[r][c], P[r][c + 1]);
      if (r + 1 < rows) {
        seg(P[r][c], P[r + 1][c]);
        const k = r % 2 ? c + 1 : c - 1;
        if (k >= 0 && k < cols) seg(P[r][c], P[r + 1][k]);
      }
    }
  return d;
}

function lattice(x0: number, y0: number, x1: number, y1: number, dx: number, dy: number, seed: number) {
  const rand = rng(seed);
  return triMesh(Math.ceil((y1 - y0) / dy) + 1, Math.ceil((x1 - x0) / dx) + 2, (r, c) => [
    x0 + (c - (r % 2 ? 0 : 0.5)) * dx + rand() * dx * 0.34,
    y0 + r * dy + c * 3 + rand() * dy * 0.34,
  ]);
}

const headRand = rng(77);
const HEAD_MESH = triMesh(10, 13, (r, c) => {
  const u = ((c + (r % 2 ? 0.25 : -0.25)) / 12) * 2 - 1;
  const v = (r / 9) * 2 - 1;
  return [
    640 + Math.sin((u * Math.PI) / 2) * 262 + headRand() * 13,
    195 + Math.sin((v * Math.PI) / 2) * 152 + u * 36 + headRand() * 11,
  ];
});
const NECK_MESH = lattice(400, 270, 720, 480, 42, 38, 31);
const UPPER_MESH = lattice(160, 410, 780, 960, 47, 41, 5);
const U = [0, 0.04, 0.1, 0.2, 0.36, 0.56, 0.76, 0.9, 0.96, 1];
const stemRand = rng(19);
const STEM_MESH = triMesh(17, U.length, (r, c) => {
  const t = Math.pow(r / 16, 0.95);
  const lx = 470 + (905 - 470) * t;
  const ly = 950 + (1490 - 950) * t;
  const rx = 742 + (990 - 742) * t - 22 * Math.sin(t * Math.PI);
  const ry = 900 + (1460 - 900) * t;
  const j = c > 2 && c < 7 ? 18 * (1 - t) : 2;
  return [lx + (rx - lx) * U[c] + stemRand() * j, ly + (ry - ly) * U[c] + stemRand() * j + (c % 2 ? 10 : 0)];
});

const HEAD = "M383 228C388 130 500 50 668 50C800 52 878 130 884 212C884 270 850 322 820 338C760 342 700 328 640 313C580 300 470 284 383 235Z";
const BODY = "M172 558L246 433L320 417L400 418L520 444L640 462L700 470L738 490L728 560L720 680L728 830L745 930Q780 1090 850 1235L985 1455Q998 1492 960 1503Q925 1508 905 1480L740 1280L490 975L300 750Z";

const Implant = () => (
  <Scene $x={1500} $y={160} width="400" height="800" viewBox="0 0 1200 1568" preserveAspectRatio="none">
    <defs>
      <radialGradient id="headShade" cx="0.68" cy="0.3" r="0.68">
        <stop offset="0" stopColor="#0000ee" />
        <stop offset="0.5" stopColor="#0000b8" />
        <stop offset="1" stopColor="#000058" />
      </radialGradient>
      <clipPath id="clipHead"><path d={HEAD} /></clipPath>
      <clipPath id="clipNeck"><path d="M492 270L705 322L636 475L418 438Z" /></clipPath>
      <clipPath id="clipBody"><path d={BODY} /></clipPath>
      <clipPath id="clipUpper"><path d="M150 400H780V905H600L490 975L150 800Z" /></clipPath>
    </defs>
    <g clipPath="url(#clipBody)">
      <path d={BODY} fill="#0000a4" />
      <path d="M325 440L600 480L725 500V880L730 905L640 905L600 890L520 800L505 740L510 640L525 600V550L480 515L420 560L375 620L400 680L440 740L500 800L545 905L490 965L240 610L265 580L300 500Z" fill="#0073a6" />
      <path d="M530 482L700 497L725 540V875L700 875L640 880L600 850L580 760L590 600L560 560ZM360 452L462 468L415 492ZM290 700L345 715L385 770L465 800L490 860L525 925L490 960L300 750Z" fill="#00a6a2" />
      <path d="M565 488L690 500L640 522L600 532ZM722 630L690 670L650 750L635 810L680 870L722 865ZM340 775L385 790L450 870L470 935L380 830Z" fill="#00a473" />
      <path d="M722 700L690 715L650 785L690 860L722 865ZM385 845L440 870L460 905L430 905Z" fill="#00a400" />
      <path d="M722 760L700 765L655 830L690 865L722 850Z" fill="#73a400" />
      <path d="M722 775L695 790L685 830L722 850Z" fill="#b4a000" />
      <path d="M722 790L708 800V830L722 838Z" fill="#e05a10" />
      <circle cx="717" cy="818" r="6" fill="#e00010" />
      <g fill="none" stroke="#000" strokeWidth="1.4">
        <path d={UPPER_MESH} clipPath="url(#clipUpper)" vectorEffect="non-scaling-stroke" />
        <path d={STEM_MESH} vectorEffect="non-scaling-stroke" />
        <path d="M246 433L200 560L330 740L520 970L760 1260L930 1490M260 600L350 640L400 740L545 900L800 1180L950 1470M340 630L420 740L540 890M350 430L520 462L700 496L704 680L706 860M700 500L690 700L700 860L800 1150L965 1450M712 500V860M225 520L250 590L510 950" vectorEffect="non-scaling-stroke" />
      </g>
      <path d="M320 425L520 458L735 500" fill="none" stroke="#000" strokeWidth="3" vectorEffect="non-scaling-stroke" />
    </g>
    <path d={BODY} fill="none" stroke="#000" strokeWidth="3.6" strokeLinejoin="round" vectorEffect="non-scaling-stroke" />
    <g clipPath="url(#clipNeck)">
      <path d="M480 260H720V480H400Z" fill="#0000a4" />
      <path d="M490 270L515 285V360L490 400L440 425L410 440Z" fill="#00505c" />
      <path d="M630 315L710 328L640 470L600 452L592 405L615 350Z" fill="#0078a8" />
      <path d="M672 345L705 332L640 475L622 462L650 400Z" fill="#00a6a2" />
      <path d={NECK_MESH} fill="none" stroke="#000" strokeWidth="1.4" vectorEffect="non-scaling-stroke" />
      <path d="M500 280L440 430M515 285L455 430M690 325L625 465" fill="none" stroke="#000" strokeWidth="1.4" vectorEffect="non-scaling-stroke" />
    </g>
    <path d="M490 275L420 432M704 325L638 465" stroke="#000" strokeWidth="3" vectorEffect="non-scaling-stroke" />
    <path d="M400 425L520 455L645 468" fill="none" stroke="#000" strokeWidth="3.5" vectorEffect="non-scaling-stroke" />
    <path d={HEAD} fill="url(#headShade)" />
    <g clipPath="url(#clipHead)">
      <path d={HEAD_MESH} fill="none" stroke="#000" strokeWidth="1.5" vectorEffect="non-scaling-stroke" />
    </g>
    <path d={HEAD} fill="none" stroke="#000" strokeWidth="2.4" vectorEffect="non-scaling-stroke" />
  </Scene>
);

const RulerText = ({ x, y, w, children }: { x: number; y: number; w: number; children: string }) => (
  <text x={x} y={y} textLength={w} lengthAdjust="spacingAndGlyphs" fontFamily={FONT} fontSize="25" fill="#111">{children}</text>
);
const Ruler = () => (
  <Scene $x={1500} $y={925} width="600" height="100" viewBox="1500 925 600 100">
    <rect x="1538" y="965" width="422" height="19" fill="#fff" stroke="#666" strokeWidth="2.4" />
    <rect x="1537" y="965" width="106" height="19" />
    <rect x="1747" y="965" width="108" height="19" />
    <RulerText x={1512} y={953} w={50}>0.00</RulerText>
    <RulerText x={1715} y={953} w={63}>50.00</RulerText>
    <RulerText x={1921} y={953} w={142}>100.00 (mm)</RulerText>
    <RulerText x={1609} y={1011} w={63}>25.00</RulerText>
    <RulerText x={1821} y={1011} w={63}>75.00</RulerText>
  </Scene>
);

const Triad = () => (
  <Scene $x={2560} $y={720} width="312" height="230" viewBox="0 0 936 690">
    <defs>
      <radialGradient id="cyanBall" cx="0.55" cy="0.3" r="0.7"><stop offset="0" stopColor="#00e8e8" /><stop offset="0.6" stopColor="#00c0c0" /><stop offset="1" stopColor="#005858" /></radialGradient>
      <radialGradient id="blueBall" cx="0.7" cy="0.4" r="0.7"><stop offset="0" stopColor="#0000e0" /><stop offset="1" stopColor="#000050" /></radialGradient>
      <linearGradient id="greenCone" x1="0" x2="1"><stop offset="0" stopColor="#003c00" /><stop offset="0.5" stopColor="#009000" /><stop offset="1" stopColor="#007000" /></linearGradient>
    </defs>
    <path d="M434 517L682 404" stroke="#700000" strokeWidth="20" />
    <path d="M432 513L682 400" stroke="#a80000" strokeWidth="11" />
    <polygon points="764,365 665,370 697,434" fill="#c80000" />
    <path d="M430 520L317 280" stroke="#004c00" strokeWidth="18" />
    <path d="M433 518L320 280" stroke="#008400" strokeWidth="10" />
    <polygon points="275,192 346,262 312,286 280,291" fill="url(#greenCone)" />
    <rect x="422" y="515" width="17" height="40" fill="#0000b0" />
    <circle cx="436" cy="572" r="36" fill="url(#blueBall)" />
    <path d="M462 551H482M466 597H482" stroke="#7878f4" strokeWidth="6" />
    <circle cx="516" cy="329" r="38" fill="url(#cyanBall)" />
    <text x="250" y="141" fontFamily="Roboto, sans-serif" fontSize="74" textLength="43" lengthAdjust="spacingAndGlyphs" fill="#28b828">Y</text>
    <text x="814" y="340" fontFamily="Roboto, sans-serif" fontSize="74" textLength="43" lengthAdjust="spacingAndGlyphs" fill="#ff3838">X</text>
  </Scene>
);

const BANDS = ["#ff0000", "#ffb300", "#ffff00", "#b3ff00", "#00ff00", "#00ffb3", "#00ffff", "#00b3ff", "#0000ff"];
const LABELS = ["431.28", "377.37", "323.46", "269.55", "215.64", "161.73", "107.82", "53.91"];

/* ---------- lower panels ---------- */

const Lower = styled.div`
  display: flex;
  flex: none;
  height: 340px;
  margin-top: 7px;
`;
const GraphPanel = styled.div`
  display: flex;
  flex: none;
  flex-direction: column;
  width: 1117px;
  margin-right: 9px;
`;
const GraphToolbar = styled.div`
  display: flex;
  flex: none;
  align-items: center;
  height: 54px;
  background: #eeeef2;
`;
const ChartArea = styled.div`
  flex: none;
  height: 208px;
  background: #fff;
  border-bottom: 2px solid #cccedb;
`;
const Tabs = styled.div`
  display: flex;
  align-items: flex-start;
  height: 36px;
  font-size: 23px;
  line-height: 32px;
`;
const Tab = styled.div<{ $on?: boolean }>`
  box-sizing: border-box;
  height: 38px;
  margin-top: -2px;
  padding: 1px 11px 0 12px;
  color: ${(p) => (p.$on ? "#0078d0" : "#444")};
  ${(p) =>
    p.$on &&
    css`
      padding: 1px 9px 0 10px;
      background: #f6f6f8;
      border: 2px solid #cccedb;
      border-top: 0;
    `}
`;

const TICKS: [number, string, number, number][] = [
  [850, "0.", 842, 19], [956, "0.125", 948, 56], [1062, "0.25", 1056, 43], [1168, "0.375", 1162, 56], [1274, "0.5", 1268, 32],
  [1380, "0.625", 1376, 56], [1486, "0.75", 1483, 43], [1592, "0.875", 1590, 56], [1698, "1.", 1680, 18],
];
const ChartText = ({ x, y, w, children, bold, size = 22 }: { x: number; y: number; w: number; children: string; bold?: boolean; size?: number }) => (
  <text x={x} y={y} textLength={w} lengthAdjust="spacingAndGlyphs" fontFamily={FONT} fontSize={size} fontWeight={bold ? 700 : 400}>{children}</text>
);
const Chart = () => (
  <svg width="1117" height="208" viewBox="627 1151 1117 208">
    <g transform="translate(698 1231) rotate(-90)"><ChartText x={0} y={0} w={74} bold size={27}>[MPa]</ChartText></g>
    <ChartText x={760} y={1211} w={69}>485.19</ChartText>
    <path d="M850 1196H1699M850 1200H1699" stroke="#a8a8a8" strokeWidth="2" />
    {TICKS.map(([x, t, tx, w]) => (
      <g key={x}>
        <path d={`M${x} 1196V1211`} stroke="#a8a8a8" strokeWidth="2" />
        <ChartText x={tx} y={1237} w={w}>{t}</ChartText>
      </g>
    ))}
    {[1020, 1190, 1528, 1698].map((x) => <rect key={x} x={x - 3} y="1193" width="6" height="6" fill="#0000c8" />)}
    <path d="M1525 1200h6M1695 1200h6" stroke="#008000" strokeWidth="2" />
    <path d="M1695 1193v-4l3-3 3 3v4z" />
    <ChartText x={1680} y={1179} w={18} bold>1.</ChartText>
    <ChartText x={1262} y={1286} w={29} bold size={23}>[s]</ChartText>
    <rect x="851" y="1306" width="847" height="28" fill="#f0f0f0" stroke="#a0a0a0" strokeWidth="2" />
    <ChartText x={1268} y={1329} w={12}>1</ChartText>
  </svg>
);

const TabularPanel = styled.div`
  display: flex;
  flex: 1;
  flex-direction: column;
  background: #a0a0a0;
`;
const Table = styled.div`
  display: grid;
  grid-template-columns: 30px 91px 215px 216px 200px;
  grid-template-rows: 36px repeat(4, 30px);
  width: 752px;
`;
const HeadCell = styled.div<{ $c?: string }>`
  display: flex;
  align-items: center;
  gap: 9px;
  padding-left: 7px;
  border-right: 2px solid #707070;
  border-bottom: 2px solid #707070;
  background: #f4f4f4;
  color: ${(p) => p.$c ?? "#000"};
  line-height: 26px;
`;
const IndexCell = styled.div`
  padding: 1px 0 0 4px;
  border-right: 2px solid #707070;
  border-bottom: 2px solid #707070;
  background: #f4f4f4;
  line-height: 27px;
`;
const DataCell = styled.div`
  padding: 1px 0 0 6px;
  border-right: 2px solid #c0c0c0;
  border-bottom: 2px solid #c0c0c0;
  background: #e1e5e8;
  line-height: 27px;
`;
const Check = styled.div`
  box-sizing: border-box;
  width: 30px;
  height: 30px;
  border: 3px solid #888;
  border-right-color: #e4e4e4;
  border-bottom-color: #e4e4e4;
  background: #fff;
`;
const Checked = () => (
  <Check><svg width="24" height="24" viewBox="0 0 24 24"><path d="M5 10l5 6 9-11" stroke="#000" strokeWidth="4" fill="none" /></svg></Check>
);
const ROWS: [string, string, number, string, number, string, number][] = [
  ["0.2", "5.8167e-016", 123, "97.038", 67, "10.52", 55],
  ["0.4", "1.1633e-015", 123, "194.08", 67, "21.04", 55],
  ["0.8", "2.3268e-015", 123, "388.15", 67, "42.081", 66],
  ["1.", "2.9083e-015", 123, "485.19", 67, "52.601", 66],
];

const StatusBar = styled.div`
  display: flex;
  flex: none;
  align-items: center;
  height: 37px;
  padding-left: 1863px;
  background: ${BLUE};
  color: #fff;
  font-size: 23px;
  line-height: 32px;
`;
const StatusItem = styled.div<{ $l: number }>`
  flex: none;
  margin-left: ${(p) => p.$l}px;
  padding-top: 4px;
`;

/* ---------- app ---------- */

export default function App() {
  return (
    <Window>
      <Global />
      <TopEdge />
      <Body>
        <LeftColumn>
          <Header title="Outline" w={79} l={3} active />
          <OutlineBar>
            <Gripper $l={13} />
            <Combo $w={202} $l={13}><Fit w={65}>Name</Fit><Tri $s={7} /></Combo>
            <Combo $w={180} $l={-2} $muted><Fit w={157}>Search Outline</Fit></Combo>
            <Slot $l={10} $w={24}><svg width="24" height="16" viewBox="0 0 24 16"><path d="M1 2l11 11L23 2" stroke={GOLD} strokeWidth="3" fill="none" /></svg></Slot>
            <MoreMark><Tri as="div" $c="#1e1e1e" $s={6} /></MoreMark>
          </OutlineBar>
          <TreeArea>
            <ProjectRow>
              <TreeIcon><Glyph name="project" /></TreeIcon>
              <Fit w={95}>Project*</Fit>
            </ProjectRow>
            {NODES.map((n, i) => <TreeNode key={i} n={n} />)}
          </TreeArea>
          <HScroll><HThumb /></HScroll>
          <Header title={'Details of "Equivalent Stress"'} w={301} l={2} />
          <DetailsBody>
            <DetailGrid>
              {DETAILS.map((d) => (
                <DetailRow key={d.k}>
                  <DetailGutter>{d.section && <SectionBox />}</DetailGutter>
                  {d.section ? (
                    <Cell $last $bold><Fit w={d.kw}>{d.k}</Fit></Cell>
                  ) : (
                    <>
                      <Cell $w={254}>{d.tick && <TickBox />}<Fit w={d.kw}>{d.k}</Fit></Cell>
                      <Cell $w={312} $last $ro={d.ro}>{d.v && <Fit w={d.vw!}>{d.v}</Fit>}</Cell>
                    </>
                  )}
                </DetailRow>
              ))}
              <DetailRow><DetailGutter /><Cell $last /></DetailRow>
            </DetailGrid>
            <VScroll><VThumb /></VScroll>
          </DetailsBody>
        </LeftColumn>

        <RightColumn>
          <TopToolbar>
            <Gripper $l={20} />
            <Slot $l={21}><Glyph name="magPrev" /></Slot>
            <Slot $l={16}><Glyph name="magNext" /></Slot>
            <Sep $l={12} />
            <Slot $l={6} $w={44} $on><Glyph name="shaded" /></Slot>
            <Slot $l={8}><Glyph name="shadedPlain" /></Slot>
            <Slot $l={16}><Glyph name="toggle" /></Slot>
            <Sep $l={12} />
            <Slot $l={14}><Glyph name="explode" /></Slot>
            <Sep $l={12} />
            <Slot $l={6} $w={66} $on><Glyph name="rotate" /><Tri /></Slot>
            <Slot $l={8}><Glyph name="pan" /></Slot>
            <Slot $l={18}><Glyph name="zoomUD" /></Slot>
            <Slot $l={14}><Glyph name="zoomPlus" /></Slot>
            <Slot $l={16}><Glyph name="zoomFit" /></Slot>
            <Slot $l={16}><Glyph name="zoomSel" /></Slot>
            <Slot $l={16}><Glyph name="zoomUD" /></Slot>
            <Sep $l={13} />
            <BarText $l={13}><Fit w={64}>Select</Fit></BarText>
            <Slot $l={14}><Glyph name="mode" /></Slot>
            <BarText $l={6}><Fit w={64}>Mode</Fit></BarText>
            <Tri $l={1} />
            <Slot $l={22} $w={30}><Glyph name="selFilter" size={30} /></Slot>
            <Slot $l={16}><Glyph name="selVertex" /></Slot>
            <Slot $l={16}><Glyph name="selEdge" /></Slot>
            <Slot $l={16}><Glyph name="selFace" /></Slot>
            <Slot $l={16}><Glyph name="selBody" /></Slot>
            <Slot $l={16}><Glyph name="selNode" /></Slot>
            <Slot $l={16}><Glyph name="selElemFace" /></Slot>
            <Slot $l={16}><Glyph name="selElem" /></Slot>
            <Slot $l={15}><Glyph name="xyz" /></Slot>
            <Slot $l={17}><Glyph name="label100" /></Slot>
            <Slot $l={16}><Glyph name="abc" /></Slot>
            <Sep $l={13} />
            <Slot $l={13}><Glyph name="chart" /></Slot>
            <Sep $l={12} />
            <Slot $l={14}><Glyph name="clipboard" /></Slot>
            <BarText $l={6}><Fit w={106}>Clipboard</Fit></BarText>
            <Tri $l={2} />
            <BarText $l={24}><Fit w={96}>[ Empty ]</Fit></BarText>
            <Sep $l={11} />
            <Slot $l={14}><Glyph name="extend" /></Slot>
            <BarText $l={6}><Fit w={71}>Extend</Fit></BarText>
            <Tri $l={1} />
            <Slot $l={24}><Glyph name="pin" /></Slot>
            <BarText $l={6}><Fit w={96}>Select By</Fit></BarText>
            <Tri $l={1} />
            <Overflow l={177} />
          </TopToolbar>

          <Viewport>
            <Caption $bold><Fit w={230}>A: Static Structural</Fit></Caption>
            <Caption><Fit w={195}>Equivalent Stress</Fit></Caption>
            <Caption><Fit w={410}>Type: Equivalent (von-Mises) Stress</Fit></Caption>
            <Caption><Fit w={112}>Unit: MPa</Fit></Caption>
            <Caption><Fit w={104}>Time: 1 s</Fit></Caption>
            <Caption><Fit w={203}>15-06-2025 15:37</Fit></Caption>
            <Legend>
              <LegendBar>{BANDS.map((c) => <Band key={c} $c={c} />)}</LegendBar>
              <LegendLabels>
                <LegendLabel $edge $gap={-1}><Fit w={139}>485.19 Max</Fit></LegendLabel>
                {LABELS.map((t) => <LegendLabel key={t}><Fit w={t.length > 5 ? 77 : 61}>{t}</Fit></LegendLabel>)}
                <LegendLabel $edge><Fit w={187}>2.9083e-15 Min</Fit></LegendLabel>
              </LegendLabels>
            </Legend>
            <Brand>
              <Wordmark>
                <Slab $w={39} $ml={0} $clip="55% 0, 100% 0, 44% 100%, 0 100%" />
                <Slab $w={33} $ml={-9} $clip="22% 4%, 28% 4%, 100% 100%, 45% 100%, 0 36%" />
                <Fit w={159}>nsys</Fit>
              </Wordmark>
              <Release><Fit w={135}>2024 R2</Fit></Release>
              <Rule />
              <Edition><Fit w={179}>STUDENT</Fit></Edition>
            </Brand>
            <Implant />
            <Ruler />
            <Triad />
          </Viewport>

          <Lower>
            <GraphPanel>
              <Header title="Graph" w={65} l={10} />
              <GraphToolbar>
                <Gripper $l={19} />
                <BarText $l={22}><Fit w={112}>Animation</Fit></BarText>
                <Slot $l={17}><Glyph name="first" /></Slot>
                <Slot $l={16}><Glyph name="play" /></Slot>
                <Slot $l={7} $w={44} $on><Glyph name="stop" /></Slot>
                <Slot $l={8}><Glyph name="last" /></Slot>
                <Sep $l={12} />
                <Slot $l={6} $w={44} $on><Glyph name="filmGreen" /></Slot>
                <Slot $l={8}><Glyph name="filmBlue" /></Slot>
                <Sep $l={12} />
                <Combo $w={201} $l={6}><Fit w={108}>20 Frames</Fit><Tri $s={8} /></Combo>
                <Combo $w={200} $l={-1}><Fit w={127}>2 Sec (Auto)</Fit><Tri $s={8} /></Combo>
                <Sep $l={5} />
                <Slot $l={13}><Glyph name="exportVideo" /></Slot>
                <Sep $l={13} />
                <Slot $l={13}><Glyph name="magPlay" /></Slot>
                <Slot $l={16}><Glyph name="rgb" /></Slot>
                <Slot $l={16}><Glyph name="curve" /></Slot>
                <Overflow l={43} />
              </GraphToolbar>
              <ChartArea><Chart /></ChartArea>
              <Tabs>
                <Tab><Fit w={104}>Messages</Fit></Tab>
                <Tab $on><Fit w={64}>Graph</Fit></Tab>
              </Tabs>
            </GraphPanel>
            <TabularPanel>
              <Header title="Tabular Data" w={133} l={10} />
              <Table>
                <HeadCell />
                <HeadCell><Fit w={76}>Time [s]</Fit></HeadCell>
                <HeadCell $c="#c8001c"><Checked /><Fit w={158}>Minimum [MPa]</Fit></HeadCell>
                <HeadCell $c="#0a8a1c"><Checked /><Fit w={160}>Maximum [MPa]</Fit></HeadCell>
                <HeadCell $c="#0000d0"><Checked /><Fit w={144}>Average [MPa]</Fit></HeadCell>
                {ROWS.map((r, i) => (
                  <React.Fragment key={i}>
                    <IndexCell>{i + 1}</IndexCell>
                    <DataCell><Fit w={i === 3 ? 17 : 31}>{r[0]}</Fit></DataCell>
                    <DataCell><Fit w={r[2]}>{r[1]}</Fit></DataCell>
                    <DataCell><Fit w={r[4]}>{r[3]}</Fit></DataCell>
                    <DataCell><Fit w={r[6]}>{r[5]}</Fit></DataCell>
                  </React.Fragment>
                ))}
              </Table>
            </TabularPanel>
          </Lower>
        </RightColumn>
      </Body>
      <StatusBar>
        <Glyph name="message" size={32} />
        <StatusItem $l={4}><Fit w={112}>1 Message</Fit></StatusItem>
        <StatusItem $l={34}><Fit w={134}>No Selection</Fit></StatusItem>
        <Tri $l={43} $c="#fff" $up $s={8} />
        <StatusItem $l={13}><Fit w={322}>Metric (mm, kg, N, s, mV, mA)</Fit></StatusItem>
        <StatusItem $l={23}><Fit w={85}>Degrees</Fit></StatusItem>
        <StatusItem $l={24}><Fit w={54}>rad/s</Fit></StatusItem>
        <StatusItem $l={25}><Fit w={74}>Celsius</Fit></StatusItem>
      </StatusBar>
    </Window>
  );
}
